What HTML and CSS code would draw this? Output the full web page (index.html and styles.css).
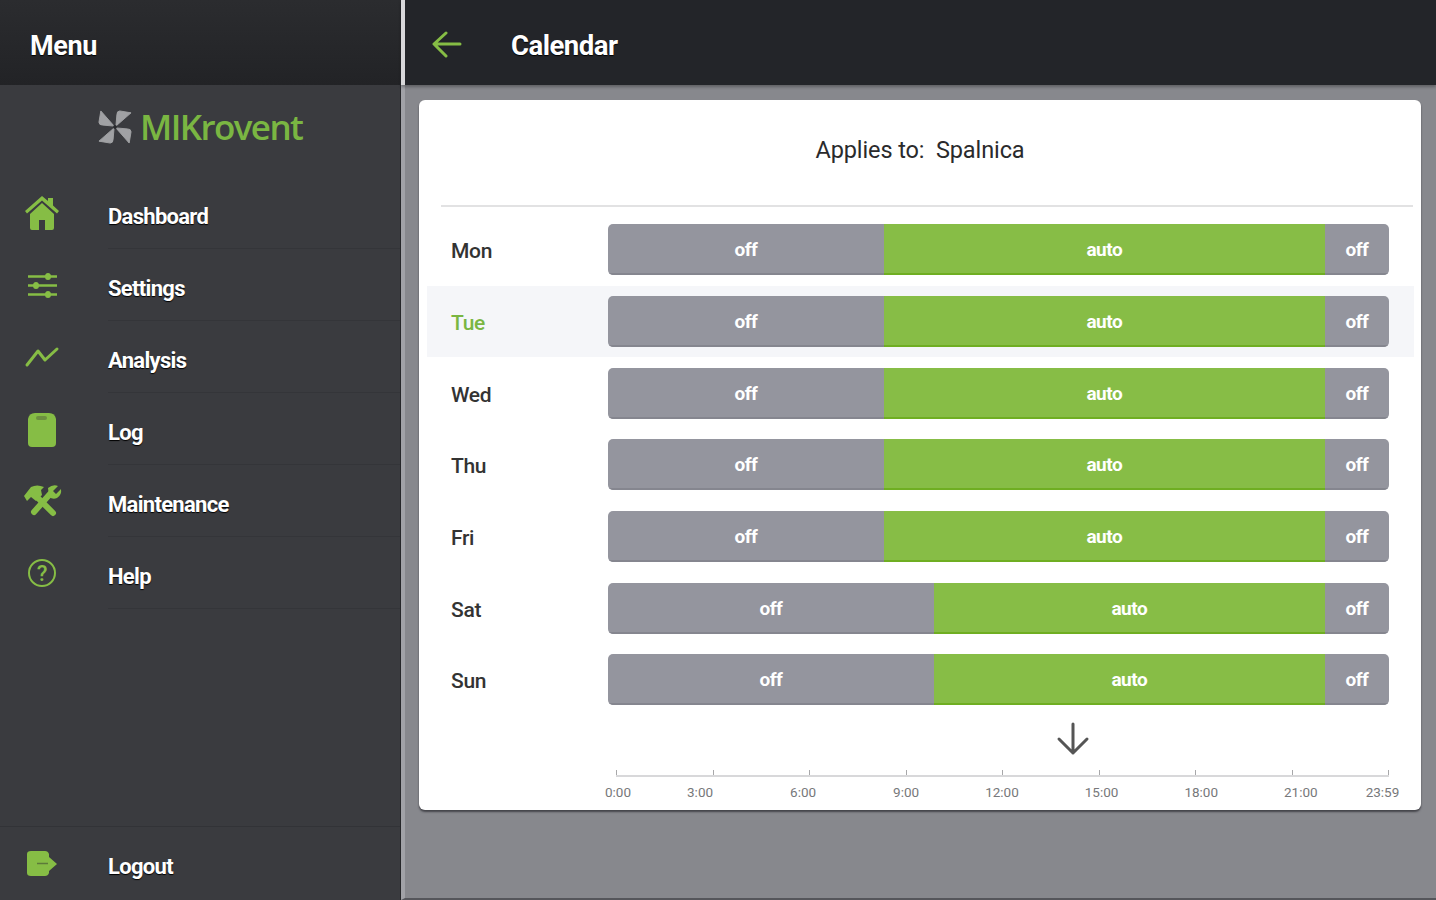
FILE: index.html
```html
<!DOCTYPE html>
<html lang="en">
<head>
    <meta charset="UTF-8">
    <meta name="viewport" content="width=device-width, initial-scale=1.0">
    <title>MIKrovent Calendar</title>
    <link rel="stylesheet" href="styles.css">
</head>
<body>
    <div class="app">
        <!-- Side menu -->
        <aside class="sidebar">
            <div class="sidebar-head">Menu</div>
            <div class="logo">
                <svg class="logo-mark" width="34" height="36" viewBox="0 0 36 36">
                    <g fill="#a0a1a4" stroke="#a0a1a4" stroke-linejoin="round">
                        <path d="M17 17L3 1L1 13Q1 16 5 16Z"/>
                        <path d="M17 17L3 1L1 13Q1 16 5 16Z" transform="rotate(90 18 18)"/>
                        <path d="M17 17L3 1L1 13Q1 16 5 16Z" transform="rotate(180 18 18)"/>
                        <path d="M17 17L3 1L1 13Q1 16 5 16Z" transform="rotate(270 18 18)"/>
                    </g>
                    <circle cx="18" cy="18" r="2" fill="#2a2b2e"/>
                </svg>
                <span class="logo-text">MIKrovent</span>
            </div>
            <nav class="nav">
                <a class="nav-item">
                    <span class="nav-icon">
                        <svg width="36" height="36" viewBox="0 0 36 36"><path fill="#86bd45" d="M18 1L24 6V3H29V10.500L35 16L33 18.500L18 5.500L3 18.500L1 16ZM6 19L18 8L30 19V33Q30 35 28 35H21V25H15V35H8Q6 35 6 33Z"/></svg>
                    </span>
                    <span class="nav-label">Dashboard</span>
                </a>
                <a class="nav-item">
                    <span class="nav-icon">
                        <svg width="36" height="36" viewBox="0 0 36 36" fill="#86bd45" stroke="#86bd45">
                            <path stroke-width="2.500" d="M4 9.500H33M4 18.500H33M4 27.500H33"/>
                            <ellipse cx="24" cy="9.500" rx="3" ry="3.500" stroke="none"/>
                            <ellipse cx="12" cy="18.500" rx="3" ry="3.500" stroke="none"/>
                            <ellipse cx="24" cy="27.500" rx="3" ry="3.500" stroke="none"/>
                        </svg>
                    </span>
                    <span class="nav-label">Settings</span>
                </a>
                <a class="nav-item">
                    <span class="nav-icon">
                        <svg width="36" height="36" viewBox="0 0 36 36"><path fill="none" stroke="#86bd45" stroke-width="3" stroke-linecap="round" stroke-linejoin="round" d="M3 26L14 12L21 21L33 10"/></svg>
                    </span>
                    <span class="nav-label">Analysis</span>
                </a>
                <a class="nav-item">
                    <span class="nav-icon">
                        <svg width="36" height="36" viewBox="0 0 36 36">
                            <path fill="#86bd45" d="M11 2H25Q31 2 32 8V32Q32 36 28 36H8Q4 36 4 32V8Q5 2 11 2Z"/>
                            <rect x="12" y="5" width="11" height="4" rx="2" fill="#6d9040"/>
                        </svg>
                    </span>
                    <span class="nav-label">Log</span>
                </a>
                <a class="nav-item">
                    <span class="nav-icon">
                        <svg width="40" height="36" viewBox="0 0 40 36">
                            <g fill="none" stroke="#86bd45" stroke-linecap="round">
                                <path stroke-width="6" d="M12 29L28 11"/>
                                <path stroke-width="6" d="M14 13L31 30"/>
                            </g>
                            <path fill="#86bd45" d="M2 13L9 4Q15 1 22 4L19 7L20 12L14 18L9 14L5 18Z"/>
                            <path fill="#86bd45" d="M26 5Q31 1 36 3L31 8L34 11L39 6Q40 12 35 15Q31 17 27 14Z"/>
                        </svg>
                    </span>
                    <span class="nav-label">Maintenance</span>
                </a>
                <a class="nav-item">
                    <span class="nav-icon">
                        <span class="help-icon">?</span>
                    </span>
                    <span class="nav-label">Help</span>
                </a>
            </nav>
            <a class="nav-item logout">
                <span class="nav-icon">
                    <svg width="36" height="36" viewBox="0 0 36 36">
                        <path fill="#86bd45" d="M7 5H21Q24 5 25 8V11L33 18L25 25V27Q24 30 21 30H7Q3 30 3 27V8Q3 5 7 5Z"/>
                        <path stroke="#5c7a3a" stroke-width="1.500" d="M13 17.500H24"/>
                    </svg>
                </span>
                <span class="nav-label">Logout</span>
            </a>
        </aside>

        <main class="main">
            <header class="topbar">
                <svg class="back" width="30" height="28" viewBox="0 0 30 28"><path fill="none" stroke="#86bd45" stroke-width="3" stroke-linecap="round" stroke-linejoin="round" d="M28 13H3M14 2L2 13L14 25"/></svg>
                <h1>Calendar</h1>
            </header>

            <section class="card">
                <div class="applies">Applies to:&nbsp; Spalnica</div>

                <div class="day-row">
                    <span class="day">Mon</span>
                    <div class="bar">
                        <span class="seg off" style="width: 35.3%">off</span>
                        <span class="seg auto" style="width: 56.5%">auto</span>
                        <span class="seg off" style="width: 8.2%">off</span>
                    </div>
                </div>
                <div class="day-row today">
                    <span class="day">Tue</span>
                    <div class="bar">
                        <span class="seg off" style="width: 35.3%">off</span>
                        <span class="seg auto" style="width: 56.5%">auto</span>
                        <span class="seg off" style="width: 8.2%">off</span>
                    </div>
                </div>
                <div class="day-row">
                    <span class="day">Wed</span>
                    <div class="bar">
                        <span class="seg off" style="width: 35.3%">off</span>
                        <span class="seg auto" style="width: 56.5%">auto</span>
                        <span class="seg off" style="width: 8.2%">off</span>
                    </div>
                </div>
                <div class="day-row">
                    <span class="day">Thu</span>
                    <div class="bar">
                        <span class="seg off" style="width: 35.3%">off</span>
                        <span class="seg auto" style="width: 56.5%">auto</span>
                        <span class="seg off" style="width: 8.2%">off</span>
                    </div>
                </div>
                <div class="day-row">
                    <span class="day">Fri</span>
                    <div class="bar">
                        <span class="seg off" style="width: 35.3%">off</span>
                        <span class="seg auto" style="width: 56.5%">auto</span>
                        <span class="seg off" style="width: 8.2%">off</span>
                    </div>
                </div>
                <div class="day-row">
                    <span class="day">Sat</span>
                    <div class="bar">
                        <span class="seg off" style="width: 41.7%">off</span>
                        <span class="seg auto" style="width: 50.1%">auto</span>
                        <span class="seg off" style="width: 8.2%">off</span>
                    </div>
                </div>
                <div class="day-row">
                    <span class="day">Sun</span>
                    <div class="bar">
                        <span class="seg off" style="width: 41.7%">off</span>
                        <span class="seg auto" style="width: 50.1%">auto</span>
                        <span class="seg off" style="width: 8.2%">off</span>
                    </div>
                </div>

                <div class="down">
                    <svg width="34" height="34" viewBox="0 0 34 34"><path fill="none" stroke="#555" stroke-width="3" stroke-linecap="round" stroke-linejoin="round" d="M17 2V31M3 17L17 31L31 17"/></svg>
                </div>

                <!-- Time axis -->
                <div class="axis">
                    <i></i><i></i><i></i><i></i><i></i><i></i><i></i><i></i><i></i>
                </div>
                <div class="axis-labels">
                    <span>0:00</span>
                    <span class="gap-a">3:00</span>
                    <span class="gap-b">6:00</span>
                    <span class="gap-b">9:00</span>
                    <span>12:00</span>
                    <span>15:00</span>
                    <span>18:00</span>
                    <span>21:00</span>
                    <span class="gap-c">23:59</span>
                </div>
            </section>
        </main>
    </div>
</body>
</html>
```

FILE: styles.css
```css
/* Page */
body {
    margin: 0;
    font-family: Roboto, "Liberation Sans", sans-serif;
    overflow: hidden;
}

a {
    color: inherit;
}

.app {
    display: flex;
    width: 1436px;
    height: 900px;
}

/* Side menu */
.sidebar {
    display: flex;
    flex-direction: column;
    width: 400px;
    flex-shrink: 0;
    background-color: #3a3b3f;
    border-right: 1px solid #26272a;
    color: #fff;
}

.sidebar-head {
    height: 85px;
    padding-left: 30px;
    box-sizing: border-box;
    line-height: 92px;
    font-size: 27px;
    font-weight: 700;
    letter-spacing: -0.4px;
    background: linear-gradient(#2b2c2f, #222326);
    text-shadow: 0 1px 1px #000;
}

.logo {
    display: flex;
    align-items: center;
    height: 92px;
    padding: 0 0 9px 98px;
    box-sizing: border-box;
}

.logo-text {
    margin-left: 8px;
    font-family: "Open Sans", sans-serif;
    font-size: 35px;
    font-weight: 600;
    letter-spacing: -1.6px;
    color: #7ab642;
}

.nav-item {
    display: flex;
    align-items: center;
    height: 72px;
    padding-top: 6px;
    box-sizing: border-box;
    position: relative;
}

.nav-icon {
    display: flex;
    justify-content: center;
    align-items: center;
    width: 84px;
    height: 36px;
    margin: -6px 24px 0 0;
    flex-shrink: 0;
}

.nav-label {
    font-size: 22px;
    font-weight: 700;
    letter-spacing: -0.7px;
    text-shadow: 0 1px 1px #000;
}

.nav .nav-item::after {
    content: "";
    position: absolute;
    left: 108px;
    right: 0;
    bottom: 0;
    height: 1px;
    background-color: #343539;
}

.help-icon {
    width: 24px;
    height: 24px;
    border: 2.5px solid #86bd45;
    border-radius: 50%;
    text-align: center;
    line-height: 25px;
    font-size: 22px;
    font-weight: 500;
    color: #86bd45;
}

.logout {
    margin-top: auto;
    height: 74px;
    border-top: 1px solid #323337;
}

/* Main column */
.main {
    flex: 1;
    display: flex;
    flex-direction: column;
    align-items: flex-start;
    background-color: #87888d;
    border-left: 4px solid #a1a2a7;
    border-bottom: 2px solid #55565b;
    box-sizing: border-box;
    height: 900px;
}

.topbar {
    display: flex;
    align-items: center;
    align-self: stretch;
    height: 85px;
    margin-left: -4px;
    flex-shrink: 0;
    border-left: 4px solid #d8d8da;
    background-color: #232529;
    box-shadow: 0 2px 3px rgba(0, 0, 0, 0.3);
}

.back {
    margin: 4px 0 0 27px;
}

.topbar h1 {
    margin: 6px 0 0 49px;
    font-size: 27.5px;
    font-weight: 700;
    letter-spacing: -0.5px;
    color: #fff;
    text-shadow: 0 1px 1px #000;
}

/* Calendar card */
.card {
    width: 1002px;
    height: 710px;
    margin: 15px 0 0 14px;
    background-color: #fff;
    border-radius: 6px;
    box-shadow: 0 2px 2px rgba(40, 40, 45, 0.7);
}

.applies {
    height: 107px;
    margin: 0 8px 7px 22px;
    padding-right: 14px;
    box-sizing: border-box;
    border-bottom: 2px solid #e2e2e3;
    text-align: center;
    line-height: 100px;
    font-size: 23.5px;
    letter-spacing: -0.1px;
    color: #2a2a2c;
}

.day-row {
    display: flex;
    align-items: center;
    height: 71.7px;
    margin: 0 7px 0 8px;
    padding: 0 25px 0 24px;
}

.today {
    background-color: #f5f6f9;
}

.day {
    width: 157px;
    flex-shrink: 0;
    padding-top: 3px;
    font-size: 21px;
    font-weight: 500;
    letter-spacing: -0.3px;
    color: #333;
}

.today .day {
    color: #7ab642;
}

.bar {
    display: flex;
    flex: 1;
    height: 51px;
    border-radius: 5px;
    overflow: hidden;
}

.seg {
    text-align: center;
    line-height: 51px;
    font-size: 19px;
    font-weight: 700;
    letter-spacing: -0.5px;
    color: #fff;
}

.off {
    background-color: #94959e;
    box-shadow: inset 0 -2px 0 #85868f;
}

.auto {
    background-color: #87bd46;
    box-shadow: inset 0 -2px 0 #6fae22;
}

/* Bottom of the card */
.down {
    display: flex;
    justify-content: center;
    height: 38px;
    margin: 6px 0 0 305px;
}

.axis {
    display: flex;
    justify-content: space-between;
    height: 5px;
    margin: 10px 32px 0 197px;
    border-bottom: 2px solid #d8d8da;
}

.axis i {
    width: 1px;
    background-color: #a8a8aa;
}

.axis-labels {
    display: flex;
    gap: 66px;
    margin: 7px 0 0 186px;
    font-size: 13.5px;
    line-height: 16px;
    color: #77787a;
}

.axis-labels .gap-a {
    margin-left: -10px;
}

.axis-labels .gap-b {
    margin-left: 11px;
}

.axis-labels .gap-c {
    margin-left: -18px;
}
```
